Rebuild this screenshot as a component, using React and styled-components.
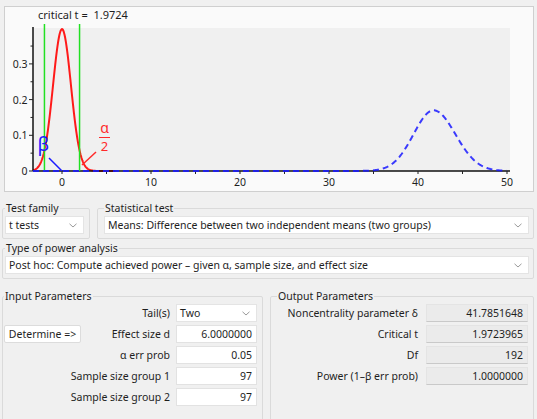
import styled, { createGlobalStyle } from "styled-components";

const GlobalStyle = createGlobalStyle`
  html, body {
    margin: 0;
    padding: 0;
    background: #f0f0f0;
  }
  body {
    font-family: "Noto Sans", "DejaVu Sans", sans-serif;
    font-size: 10.5px;
    color: #1e1e1e;
  }
`;

// plot mapping (page pixels)
const X = (v) => 62 + v * 8.9;
const Y = (p) => 171 - p * 357;

const normal = (x, m, s) =>
  Math.exp(-0.5 * ((x - m) / s) ** 2) / (s * Math.sqrt(2 * Math.PI));

function pathOf(fn, from, to, step = 0.05) {
  let d = "";
  for (let v = from; v <= to + 1e-9; v += step) {
    d += (d ? "L" : "M") + X(v).toFixed(2) + "," + Y(fn(v)).toFixed(2);
  }
  return d;
}

const central = (v) => normal(v, 0, 1.004);
// noncentral t, a little skewed to the right
const noncentral = (v) => {
  const m = 41.75;
  const s = v < m ? 2.25 : 2.45;
  return 0.17 * Math.exp(-0.5 * ((v - m) / s) ** 2);
};

const Window = styled.div`
  width: 537px;
  height: 419px;
  overflow: hidden;
  box-sizing: border-box;
  padding: 6px 3px 0 2px;
  display: flex;
  flex-direction: column;
`;

const ChartPanel = styled.div`
  height: 186px;
  margin: 0 0 0 2px;
  box-sizing: border-box;
  border: 1px solid #cfcfcf;
  background: #fafafa;

  svg {
    display: block;
  }
`;

const Row = styled.div`
  display: flex;
  gap: ${(p) => p.$gap || 0}px;
  margin-top: ${(p) => p.$top || 0}px;
`;

const Group = styled.fieldset`
  margin: 0;
  min-width: 0;
  min-inline-size: 0;
  box-sizing: border-box;
  width: ${(p) => (p.$width ? p.$width + "px" : "auto")};
  flex: ${(p) => (p.$width ? "none" : "1 1 0")};
  border: 1px solid #dadada;
  border-radius: 2px;
  padding: 0 ${(p) => p.$pr ?? 4}px ${(p) => p.$pb ?? 4}px ${(p) => p.$pl ?? 2}px;
  height: ${(p) => (p.$height ? p.$height + "px" : "auto")};

  legend {
    padding: 0 1px;
    line-height: 14px;
    margin-bottom: 1px;
  }
`;

const Select = styled.div`
  height: 18px;
  box-sizing: border-box;
  background: #fff;
  border: 1px solid #e4e4e4;
  display: flex;
  align-items: center;
  justify-content: space-between;
  padding: 0 6px 0 3px;
  white-space: nowrap;
  overflow: hidden;
`;

const Chevron = () => (
  <svg width="8" height="5" viewBox="0 0 8 5">
    <polyline points="0.5,0.8 4,4 7.5,0.8" fill="none" stroke="#9a9a9a" strokeWidth="1" />
  </svg>
);

const InputGrid = styled.div`
  display: grid;
  grid-template-columns: 77px minmax(0, 1fr) 81px;
  column-gap: 6px;
  row-gap: 3px;
  grid-auto-rows: 18px;
`;

const OutputList = styled.div`
  display: flex;
  flex-direction: column;
  gap: 3px;
`;

const OutputRow = styled.div`
  display: flex;
  align-items: center;
  gap: 8px;
  height: 18px;

  & > :first-child {
    flex: 1 1 0;
    min-width: 0;
  }
  & > :last-child {
    flex: 0 0 102px;
    width: 102px;
  }
`;

const Label = styled.div`
  grid-column: ${(p) => p.$col || "auto"};
  text-align: right;
  align-self: center;
  white-space: nowrap;
`;

const Field = styled.div`
  box-sizing: border-box;
  height: 18px;
  display: flex;
  align-items: center;
  justify-content: flex-end;
  padding-right: 4px;
  background: ${(p) => (p.$readonly ? "#ebebeb" : "#fff")};
  border: 1px solid ${(p) => (p.$readonly ? "#e4e4e4" : "#e2e2e2")};
  border-bottom-color: ${(p) => (p.$readonly ? "#c9c9c9" : "#e2e2e2")};
`;

const Button = styled.div`
  box-sizing: border-box;
  height: 18px;
  background: #fff;
  border: 1px solid #dcdcdc;
  border-radius: 2px;
  display: flex;
  align-items: center;
  justify-content: center;
  white-space: nowrap;
`;

function Chart() {
  const yTicks = [];
  for (let i = 0; i <= 7; i++) {
    const p = i * 0.05;
    const major = i % 2 === 0;
    yTicks.push(
      <line key={i} x1={major ? 29 : 30.5} x2={33} y1={Y(p)} y2={Y(p)} stroke="#222" strokeWidth="1" />
    );
  }
  const xTicks = [];
  for (let v = 0; v <= 50; v += 5) {
    xTicks.push(<line key={v} x1={X(v)} x2={X(v)} y1={171} y2={174} stroke="#222" strokeWidth="1" />);
  }
  const crit = 1.9724;
  return (
    <svg width="525" height="184" viewBox="5 7 525 184" fontFamily="Noto Sans, sans-serif">
      <rect x="33" y="28" width="477" height="143" fill="#f0f0f0" />
      <text x="38" y="19" fontSize="11" fill="#1e1e1e">critical t ={"\u00a0 "}1.9724</text>

      {[0, 0.1, 0.2, 0.3].map((p) => (
        <text key={p} x="27.5" y={Y(p) + 4} fontSize="10.5" textAnchor="end" fill="#1e1e1e">
          {p === 0 ? "0" : p.toFixed(1)}
        </text>
      ))}
      {[0, 10, 20, 30, 40, 50].map((v) => (
        <text key={v} x={X(v)} y="186" fontSize="10.5" textAnchor="middle" fill="#1e1e1e">
          {v}
        </text>
      ))}

      <path d={pathOf(central, -3.26, 6)} fill="none" stroke="#ff1a1a" strokeWidth="2" />
      <line x1="33" x2="510" y1="171" y2="171" stroke="#111" strokeWidth="1.5" />
      <line x1="33" x2="33" y1="27" y2="171" stroke="#111" strokeWidth="1.5" />
      {yTicks}
      {xTicks}

      <line x1={X(-crit)} x2={X(-crit)} y1="24" y2="171" stroke="#22e022" strokeWidth="1.5" />
      <line x1={X(crit)} x2={X(crit)} y1="24" y2="171" stroke="#22e022" strokeWidth="1.5" />

      <path
        d={pathOf(noncentral, -3.26, 50, 0.1)}
        fill="none"
        stroke="#1a1aff"
        strokeWidth="2"
        strokeDasharray="6 4"
        strokeOpacity="0.85"
      />

      <text x="37.5" y="151" fontSize="19" fill="#1a1aff">β</text>
      <line x1="49" y1="158" x2="62" y2="171" stroke="#1a1aff" strokeWidth="1.5" />

      <text x="104.5" y="133" fontSize="14" textAnchor="middle" fill="#ff2a2a">α</text>
      <line x1="99" x2="110" y1="137.5" y2="137.5" stroke="#ff2a2a" strokeWidth="1" />
      <text x="104.5" y="151" fontSize="13" textAnchor="middle" fill="#ff2a2a">2</text>
      <line x1="96" y1="152" x2="82" y2="165" stroke="#ff2a2a" strokeWidth="1.5" />
    </svg>
  );
}

const outputs = [
  ["Noncentrality parameter δ", "41.7851648"],
  ["Critical t", "1.9723965"],
  ["Df", "192"],
  ["Power (1–β err prob)", "1.0000000"],
];

export default function App() {
  return (
    <>
      <GlobalStyle />
      <Window>
        <ChartPanel>
          <Chart />
        </ChartPanel>

        <Row $gap={7} $top={9}>
          <Group $width={88} $pl={2} $pr={5}>
            <legend>Test family</legend>
            <Select>
              t tests <Chevron />
            </Select>
          </Group>
          <Group $pl={6} $pr={4}>
            <legend>Statistical test</legend>
            <Select>
              Means: Difference between two independent means (two groups) <Chevron />
            </Select>
          </Group>
        </Row>

        <Row $top={2}>
          <Group $pl={2} $pr={4}>
            <legend>Type of power analysis</legend>
            <Select>
              Post hoc: Compute achieved power – given α, sample size, and effect size <Chevron />
            </Select>
          </Group>
        </Row>

        <Row $gap={7} $top={10}>
          <Group $width={261} $pl={1} $pr={5} $height={160}>
            <legend>Input Parameters</legend>
            <InputGrid>
              <Label $col="1 / 3">Tail(s)</Label>
              <Select>
                Two <Chevron />
              </Select>
              <Button>Determine =&gt;</Button>
              <Label>Effect size d</Label>
              <Field>6.0000000</Field>
              <Label $col="1 / 3">α err prob</Label>
              <Field>0.05</Field>
              <Label $col="1 / 3">Sample size group 1</Label>
              <Field>97</Field>
              <Label $col="1 / 3">Sample size group 2</Label>
              <Field>97</Field>
            </InputGrid>
          </Group>
          <Group $pl={6} $pr={5} $height={160}>
            <legend>Output Parameters</legend>
            <OutputList>
              {outputs.map(([label, value]) => (
                <OutputRow key={label}>
                  <Label>{label}</Label>
                  <Field $readonly>{value}</Field>
                </OutputRow>
              ))}
            </OutputList>
          </Group>
        </Row>
      </Window>
    </>
  );
}
